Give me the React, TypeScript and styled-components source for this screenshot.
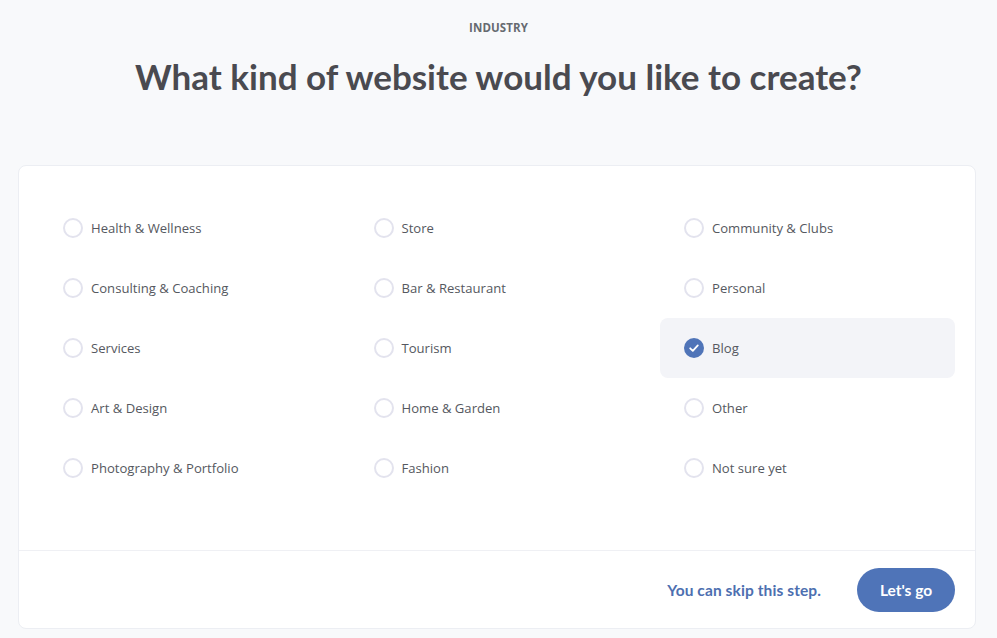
import React, { useState } from "react";
import styled, { createGlobalStyle } from "styled-components";

const Global = createGlobalStyle`
  html, body { margin: 0; padding: 0; background: #f8f9fb; }
  * { box-sizing: border-box; }
`;

const Page = styled.div`
  width: 997px;
  height: 638px;
  padding: 0 21px 0 18px;
  background: #f8f9fb;
  display: flex;
  flex-direction: column;
`;

const Header = styled.header`
  display: flex;
  flex-direction: column;
  align-items: center;
  padding-top: 20px;
  height: 165px;
  padding-left: 3px;
`;

const Eyebrow = styled.div`
  font-family: "Open Sans", "Liberation Sans", sans-serif;
  font-size: 11.5px;
  font-weight: 700;
  letter-spacing: 0.1px;
  color: #666a70;
  line-height: 16px;
  text-transform: uppercase;
`;

const Title = styled.h1`
  margin: 16px 0 0;
  font-family: Lato, "Liberation Sans", sans-serif;
  font-weight: 700;
  font-size: 35px;
  letter-spacing: 0;
  line-height: 48px;
  color: #4a4a50;
`;

const Card = styled.section`
  background: #fff;
  border: 1px solid #eceef3;
  border-radius: 8px;
  height: 464px;
  display: flex;
  flex-direction: column;
`;

const Grid = styled.div`
  display: grid;
  grid-template-columns: repeat(3, 295px);
  column-gap: 15.5px;
  grid-auto-rows: 60px;
  padding: 32px 20px 52px;
  border-bottom: 1px solid #eff0f4;
`;

const Option = styled.label<{ $selected: boolean }>`
  display: flex;
  align-items: center;
  gap: 8px;
  padding-left: 24px;
  border-radius: 8px;
  cursor: pointer;
  background: ${(p) => (p.$selected ? "#f3f4f8" : "transparent")};
  font-family: "Open Sans", "Liberation Sans", sans-serif;
  font-size: 13.1px;
  color: #555860;
`;

const Radio = styled.span<{ $selected: boolean }>`
  width: 20px;
  height: 20px;
  border-radius: 50%;
  flex: none;
  display: flex;
  align-items: center;
  justify-content: center;
  border: ${(p) => (p.$selected ? "none" : "2px solid #e3e3ee")};
  background: ${(p) => (p.$selected ? "#4f74b8" : "#fff")};
`;

const Footer = styled.footer`
  flex: 1;
  display: flex;
  align-items: center;
  justify-content: flex-end;
  gap: 36px;
  padding-right: 20px;
`;

const Skip = styled.a`
  font-family: Lato, "Liberation Sans", sans-serif;
  font-weight: 700;
  font-size: 15.5px;
  color: #4d6fb0;
  cursor: pointer;
  letter-spacing: 0.1px;
`;

const Go = styled.button`
  width: 98px;
  height: 44px;
  border: none;
  border-radius: 22px;
  background: #4f74b8;
  color: #fff;
  font-family: Lato, "Liberation Sans", sans-serif;
  font-weight: 700;
  font-size: 15.5px;
  cursor: pointer;
`;

const options = [
  "Health & Wellness",
  "Store",
  "Community & Clubs",
  "Consulting & Coaching",
  "Bar & Restaurant",
  "Personal",
  "Services",
  "Tourism",
  "Blog",
  "Art & Design",
  "Home & Garden",
  "Other",
  "Photography & Portfolio",
  "Fashion",
  "Not sure yet",
];

export default function App() {
  const [sel, setSel] = useState("Blog");
  return (
    <>
      <Global />
      <Page>
        <Header>
          <Eyebrow>Industry</Eyebrow>
          <Title>What kind of website would you like to create?</Title>
        </Header>
        <Card>
          <Grid>
            {options.map((o) => (
              <Option key={o} $selected={sel === o} onClick={() => setSel(o)}>
                <Radio $selected={sel === o}>
                  {sel === o && (
                    <svg width="12" height="12" viewBox="0 0 12 12">
                      <path d="M2.2 6.3 L4.8 8.8 L9.8 3.4" fill="none" stroke="#fff" strokeWidth="1.8" strokeLinecap="round" strokeLinejoin="round" />
                    </svg>
                  )}
                </Radio>
                {o}
              </Option>
            ))}
          </Grid>
          <Footer>
            <Skip>You can skip this step.</Skip>
            <Go>Let's go</Go>
          </Footer>
        </Card>
      </Page>
    </>
  );
}
